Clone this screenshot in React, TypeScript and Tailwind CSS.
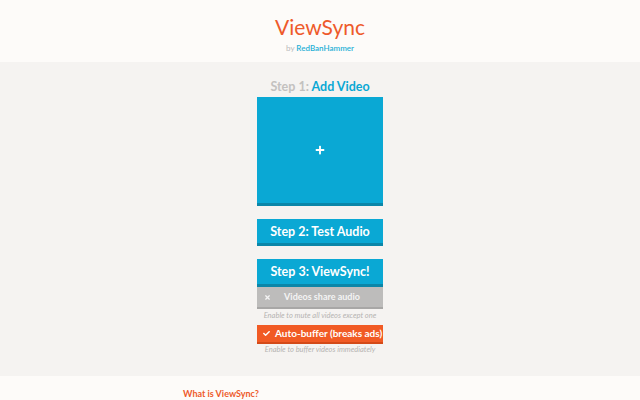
import { FaPlus, FaTimes, FaCheck } from "react-icons/fa";

export default function App() {
  return (
    <div className="min-h-[400px] w-full bg-[#f5f3f1] font-['Lato',sans-serif] overflow-hidden h-[400px]">
      {/* header */}
      <header className="h-[62px] bg-[#fdfbf9] flex flex-col items-center pt-[15px]">
        <h1 className="text-[21px] leading-[24px] text-[#ee5a2b] font-normal">ViewSync</h1>
        <p className="text-[8px] leading-[10px] text-[#b9b9b9] mt-[4px]">
          by <span className="text-[#27b0d6] font-semibold">RedBanHammer</span>
        </p>
      </header>

      {/* main */}
      <main className="h-[314px] flex flex-col items-center pt-[17px]">
        <div className="w-[126px] flex flex-col">
          <h2 className="text-[12.5px] leading-[16px] font-bold text-center text-[#c3c1bf]">
            Step 1: <span className="text-[#0aa8d4]">Add Video</span>
          </h2>
          <button className="mt-[2px] h-[109px] bg-[#0aa8d4] border-b-[3px] border-[#0b86a8] flex items-center justify-center text-white">
            <FaPlus className="w-[10px] h-[10px]" />
          </button>
          <button className="mt-[13px] h-[27px] pt-[2px] bg-[#0aa8d4] border-b-[3px] border-[#0b86a8] text-white font-bold text-[12.5px]">
            Step 2: Test Audio
          </button>
          <button className="mt-[13px] h-[28px] pt-[2px] bg-[#0aa8d4] border-b-[3px] border-[#0b86a8] text-white font-bold text-[12.5px]">
            Step 3: ViewSync!
          </button>
          <button className="h-[22px] bg-[#bdbcbb] border-b-[2px] border-[#a8a7a6] text-[#f4f4f4] font-bold text-[9px] flex items-center px-[7px]">
            <FaTimes className="w-[7px] h-[7px]" />
            <span className="flex-1 text-center pr-[3px]">Videos share audio</span>
          </button>
          <p className="text-[7.5px] italic text-[#b6b4b2] text-center mt-[2px] leading-[10px] whitespace-nowrap">
            Enable to mute all videos except one
          </p>
          <button className="mt-[4px] h-[19px] bg-[#f15a24] border-b-[2px] border-[#d44a18] text-white font-bold text-[10px] flex items-center px-[6px] gap-[5px] whitespace-nowrap">
            <FaCheck className="w-[7px] h-[7px] shrink-0" />
            <span>Auto-buffer (breaks ads)</span>
          </button>
          <p className="text-[7.5px] italic text-[#b6b4b2] text-center mt-[1px] leading-[10px] whitespace-nowrap">
            Enable to buffer videos immediately
          </p>
        </div>
      </main>

      {/* footer */}
      <footer className="bg-[#fdfbf9] h-[40px] pl-[183px] pt-[11px]">
        <h3 className="text-[9px] font-bold text-[#ee5a2b]">What is ViewSync?</h3>
      </footer>
    </div>
  );
}
